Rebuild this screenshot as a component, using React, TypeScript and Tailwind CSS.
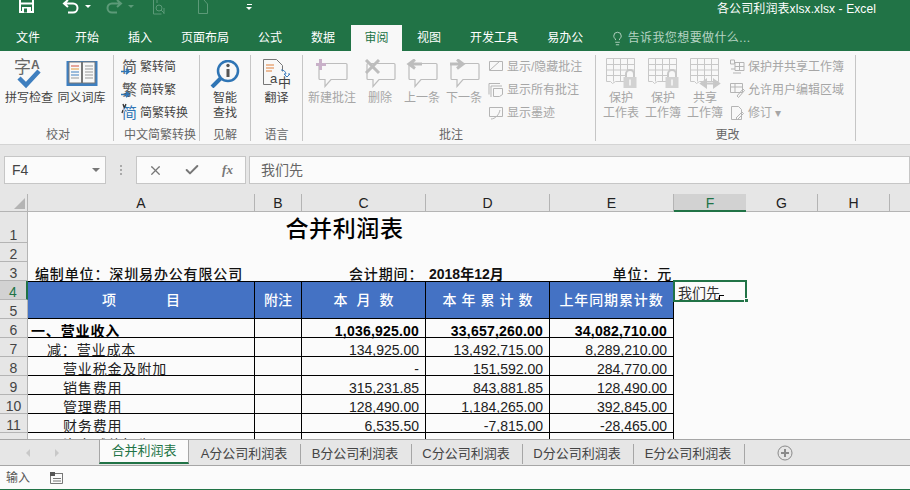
import { ReactNode } from "react";
import { Check, Lightbulb, X } from "lucide-react";

const FONT = "font-['Liberation_Sans','Noto_Sans_CJK_SC',sans-serif]";

const TABS = ["开始", "插入", "页面布局", "公式", "数据"];
const COLS = ["A", "B", "C", "D", "E", "F", "G", "H"];
const SHEETS = ["A分公司利润表", "B分公司利润表", "C分公司利润表", "D分公司利润表", "E分公司利润表"];

const ROWS = [
  { n: 6, label: "一、营业收入", pad: "pl-[3px]", bold: true, c: "1,036,925.00", d: "33,657,260.00", e: "34,082,710.00" },
  { n: 7, label: "减：营业成本", pad: "pl-[19px]", c: "134,925.00", d: "13,492,715.00", e: "8,289,210.00" },
  { n: 8, label: "营业税金及附加", pad: "pl-[35px]", c: "-", d: "151,592.00", e: "284,770.00" },
  { n: 9, label: "销售费用", pad: "pl-[35px]", c: "315,231.85", d: "843,881.85", e: "128,490.00" },
  { n: 10, label: "管理费用", pad: "pl-[35px]", c: "128,490.00", d: "1,184,265.00", e: "392,845.00" },
  { n: 11, label: "财务费用", pad: "pl-[35px]", c: "6,535.50", d: "-7,815.00", e: "-28,465.00" },
  { n: 12, label: "资产减值损失", pad: "pl-[35px]", c: "", d: "", e: "" },
];

function Group({ label, className, children }: { label: string; className: string; children: ReactNode }) {
  return (
    <section className={"flex h-[86px] shrink-0 flex-col border-r border-[#c6c6c6] " + className}>
      <div className="flex h-[70px] flex-1">{children}</div>
      <div className="-mb-[1px] text-center text-[12px] leading-[14px] text-[#666]">{label}</div>
    </section>
  );
}

function BigBtn({ icon, lines, w, dim }: { icon: ReactNode; lines: string[]; w: string; dim?: boolean }) {
  return (
    <div className={"flex shrink-0 flex-col items-center " + w + (dim ? " text-[#a6a6a6]" : " text-[#444]")}>
      <div className="flex h-[36px] items-end pb-[2px]">{icon}</div>
      {lines.map((l) => (
        <div key={l} className="whitespace-nowrap text-[12px] leading-[15px]">
          {l}
        </div>
      ))}
    </div>
  );
}

function SmallBtn({ icon, label, dim }: { icon: ReactNode; label: string; dim?: boolean }) {
  return (
    <div className={"flex h-[23px] items-center gap-[3px] whitespace-nowrap text-[12px] " + (dim ? "text-[#a6a6a6]" : "text-[#444]")}>
      <span className="flex w-[16px] justify-center">{icon}</span>
      {label}
    </div>
  );
}

function Bubble({ children }: { children?: ReactNode }) {
  return (
    <svg width="32" height="29" viewBox="0 0 32 29" fill="none" className="mb-[1px]">
      <path d="M4 4.500h26a1 1 0 0 1 1 1v14a1 1 0 0 1-1 1H15l-6 7v-7H4a1 1 0 0 1-1-1v-14a1 1 0 0 1 1-1z" fill="#f8f8f8" stroke="#bdbdbd" strokeWidth="1.200" />
      {children}
    </svg>
  );
}

function SheetGridIcon({ kind }: { kind: "lock" | "share" }) {
  return (
    <svg width="32" height="32" viewBox="0 0 32 32" fill="none" stroke="#c8c8c8">
      <path d="M1.500 1.500h28v23h-19l-3 2-2-2h-4z" fill="#f8f8f8" />
      <path d="M1.500 7.500h28M1.500 13h28M1.500 18.500h28M8.500 1.500v23M15.500 1.500v23M22.500 1.500v23" />
      {kind === "lock" ? (
        <>
          <path d="M21 20v-3a4 4 0 0 1 8 0v3" strokeWidth="2" fill="#f8f8f8" />
          <rect x="18.500" y="20" width="13" height="11" fill="#d2d2d2" stroke="none" />
          <path d="M25 22.500v6" stroke="#f8f8f8" strokeWidth="1.500" />
        </>
      ) : (
        <path d="M13 26.500h16M17 23l-5 3.500 5 3.500zM25 23l5 3.500-5 3.500z" fill="#c4c4c4" strokeWidth="2" />
      )}
    </svg>
  );
}

function Glyph({ ch, arrow, blue }: { ch: string; arrow?: boolean; blue?: boolean }) {
  return (
    <svg width="16" height="19" viewBox="0 0 16 19" className="overflow-visible">
      <text x="1" y="15" fontSize="15" fill={blue ? "#2f75b5" : "#555"} fontFamily="'Noto Sans CJK SC'">
        {ch}
      </text>
      {arrow && <path d="M0 14.500h7M5 12l3 2.500-3 2.500" stroke="#2f75b5" strokeWidth="1.700" fill="none" />}
      {blue && <path d="M2 1l1 3M5 1L3 5M2 7l-1 3" stroke="#333" strokeWidth="1.300" fill="none" />}
    </svg>
  );
}

function DimSmall({ d }: { d: string }) {
  return (
    <svg width="16" height="16" viewBox="0 0 16 16" fill="none" stroke="#b5b5b5">
      <path d={d} />
    </svg>
  );
}

function Ribbon() {
  return (
    <div className="flex h-[94px] shrink-0 items-start border-b border-[#d4d4d4] bg-[#f8f8f8] pt-[4px]">
      <Group label="校对" className="w-[114px] pl-[3px]">
        <BigBtn
          w="w-[52px]"
          lines={["拼写检查"]}
          icon={
            <svg width="30" height="33" viewBox="0 0 30 33" className="overflow-visible">
              <text x="0" y="17" fontSize="17" fill="#666" fontFamily="'Noto Sans CJK SC'">字</text>
              <text x="17" y="13" fontSize="12" fontWeight="700" fill="#666" fontFamily="'Liberation Sans'">A</text>
              <path d="M5 22l7 7L25 15" stroke="#3f7fbf" strokeWidth="4.500" fill="none" />
            </svg>
          }
        />
        <BigBtn
          w="w-[53px]"
          lines={["同义词库"]}
          icon={
            <svg width="32" height="27" viewBox="0 0 32 27" fill="none" className="mb-[2px]">
              <rect x="0.500" y="1" width="31" height="25" fill="#3f7fbf" />
              <path d="M3 2h12.500v21H3zM16.500 2H29v21H16.500z" fill="#f8f8f8" stroke="#777" />
              <path d="M5 6h8" stroke="#d0503c" />
              <path d="M5 9h8" stroke="#e09a3c" />
              <path d="M5 12h8M5 15h8" stroke="#3f7fbf" />
              <path d="M5 18h8M19 6h8M19 9h8M19 12h8M19 15h8M19 18h8" stroke="#999" />
            </svg>
          }
        />
      </Group>
      <Group label="中文简繁转换" className="w-[86px] pl-[7px]">
        <div className="flex flex-col">
          <SmallBtn icon={<Glyph ch="简" arrow />} label="繁转简" />
          <SmallBtn icon={<Glyph ch="繁" arrow />} label="简转繁" />
          <SmallBtn icon={<Glyph ch="简" blue />} label="简繁转换" />
        </div>
      </Group>
      <Group label="见解" className="w-[51px]">
        <BigBtn
          w="w-full"
          lines={["智能", "查找"]}
          icon={
            <svg width="30" height="28" viewBox="0 0 30 28" fill="none" className="mb-[1px]">
              <circle cx="18" cy="11" r="10" fill="#f8f8f8" stroke="#2f75b5" strokeWidth="2.500" />
              <path d="M10.500 18.500L2 27" stroke="#2f75b5" strokeWidth="4" />
              <path d="M18 9v8" stroke="#555" strokeWidth="3" />
              <circle cx="18" cy="5.500" r="1.700" fill="#555" />
            </svg>
          }
        />
      </Group>
      <Group label="语言" className="w-[52px]">
        <BigBtn
          w="w-full"
          lines={["翻译"]}
          icon={
            <svg width="30" height="31" viewBox="0 0 30 31" fill="none" className="overflow-visible">
              <path d="M1.500 1.500h13l6 6v6M1.500 1.500v25h8" stroke="#777" fill="#f8f8f8" />
              <path d="M4 7h8M4 10h8M4 13h6" stroke="#e0803c" />
              <text x="8" y="25" fontSize="13" fill="#444" fontFamily="'Liberation Sans'">a</text>
              <text x="16" y="29" fontSize="13" fill="#444" fontFamily="'Noto Sans CJK SC'">中</text>
              <path d="M19 12a5 5 0 0 1 5 4l-2 0 3 3 3-3-2 0" stroke="#3f7fbf" />
            </svg>
          }
        />
      </Group>
      <Group label="批注" className="w-[293px] pl-[4px]">
        <BigBtn
          w="w-[50px]"
          dim
          lines={["新建批注"]}
          icon={
            <Bubble>
              <path d="M3 0h3v4h4v3H6v4H3V7H0V4h3z" fill="#c9b1c9" />
            </Bubble>
          }
        />
        <BigBtn
          w="w-[46px]"
          dim
          lines={["删除"]}
          icon={
            <Bubble>
              <path d="M2 1l13 13M15 1L2 14" stroke="#bdbdbd" strokeWidth="3" />
            </Bubble>
          }
        />
        <BigBtn
          w="w-[38px]"
          dim
          lines={["上一条"]}
          icon={
            <Bubble>
              <path d="M16 5H5M9 0.500L3 5l6 4.500" stroke="#bdbdbd" strokeWidth="3" />
            </Bubble>
          }
        />
        <BigBtn
          w="w-[46px]"
          dim
          lines={["下一条"]}
          icon={
            <Bubble>
              <path d="M2 5h11M9 0.500L15 5 9 9.500" stroke="#bdbdbd" strokeWidth="3" />
            </Bubble>
          }
        />
        <div className="ml-[1px] flex flex-col">
          <SmallBtn dim icon={<DimSmall d="M1.500 2.500h13v9h-13zM2 11l10-9" />} label="显示/隐藏批注" />
          <SmallBtn dim icon={<DimSmall d="M1 1.500h11M1 1.500v11M3 4h11M3 4v11M5.500 6.500h9v6l-3 2h-6z" />} label="显示所有批注" />
          <SmallBtn dim icon={<DimSmall d="M1.500 2.500h13v9h-13zM3 14c4 0 8-4 9-9" />} label="显示墨迹" />
        </div>
      </Group>
      <Group label="更改" className="w-[260px] pl-[4px]">
        <BigBtn w="w-[42px]" dim lines={["保护", "工作表"]} icon={<SheetGridIcon kind="lock" />} />
        <BigBtn w="w-[42px]" dim lines={["保护", "工作簿"]} icon={<SheetGridIcon kind="lock" />} />
        <BigBtn w="w-[42px]" dim lines={["共享", "工作簿"]} icon={<SheetGridIcon kind="share" />} />
        <div className="ml-[3px] flex flex-col">
          <SmallBtn dim icon={<DimSmall d="M1.500 1h4v4h-4zM6 3.500h9v8H6zM6 7.500h9M10.500 3.500v8M2 10h4M4 14h8" />} label="保护并共享工作簿" />
          <SmallBtn dim icon={<DimSmall d="M1.500 1.500h12v9h-12zM1.500 5h12M6 1.500v9M8 14l6-7 1.500 1.500-6 7z" />} label="允许用户编辑区域" />
          <SmallBtn dim icon={<DimSmall d="M2.500 1.500h7l3 3v10h-10zM7 13l6-6 1.500 1.500-6 6z" />} label="修订 ▾" />
        </div>
      </Group>
    </div>
  );
}

function Sheet() {
  const head = "row-span-2 flex items-center justify-center border-y border-r border-black bg-[#4472c4] pt-[1px] text-[14px] font-medium text-white";
  const cell = "flex items-center justify-end border-r border-b border-black pt-[5px] pr-[6px] text-[14px] leading-[14px] text-[#222]";
  const rowHead = "flex items-end justify-center border-r border-b border-[#b4b4b4] bg-[#e6e6e6] text-[14px] leading-[14px] text-[#444]";

  return (
    <div className="h-[245px] shrink-0 overflow-hidden bg-[#fbfbfb]">
      <div className="grid grid-cols-[28px_227px_47px_124px_124px_124px_72px_72px_72px_20px] grid-rows-[18px_31px_19px_19px_19px_19px_19px_19px_19px_19px_19px_19px_19px]">
        <div className="flex items-end justify-end border-r border-b border-[#b4b4b4] bg-[#e6e6e6] p-[2px]">
          <div className="h-0 w-0 border-b-[11px] border-l-[11px] border-b-[#b4b4b4] border-l-transparent" />
        </div>
        {COLS.map((c) => (
          <div
            key={c}
            className={
              "flex items-center justify-center pt-[2px] text-[14px] " +
              (c === "F"
                ? "border-b-2 border-[#217346] bg-[#d2d2d2] text-[#217346]"
                : "border-r border-b border-[#b4b4b4] bg-[#e6e6e6] text-[#222]")
            }
          >
            {c}
          </div>
        ))}
        <div className="border-b border-[#b4b4b4] bg-[#e6e6e6]" />

        {/* 1 */}
        <div className={rowHead}>1</div>
        <div className="col-span-5 flex items-center justify-center pt-[3px] pr-[13px] text-[23px] font-medium tracking-[0.6px] text-black">
          合并利润表
        </div>
        <div className="col-span-4" />

        {/* 2 */}
        <div className={rowHead}>2</div>
        <div className="col-span-9" />

        {/* 3 */}
        <div className={rowHead}>3</div>
        <div className="col-span-2 flex items-center pt-[5px] pl-[7px] text-[14px] leading-[14px] font-medium tracking-[0.86px] whitespace-nowrap text-[#111]">
          编制单位：深圳易办公有限公司
        </div>
        <div className="flex items-center pt-[5px] pl-[47px] text-[14px] leading-[14px] font-medium tracking-[0.86px] whitespace-nowrap text-[#111]">
          会计期间：
        </div>
        <div className="flex items-center pt-[5px] pl-[3px] text-[14px] leading-[14px] font-bold whitespace-nowrap text-[#111]">2018年12月</div>
        <div className="flex items-center justify-end pt-[5px] pr-[2px] text-[14px] leading-[14px] font-medium tracking-[0.86px] whitespace-nowrap text-[#111]">
          单位：元
        </div>
        <div className="col-span-4" />

        {/* 4 and 5 */}
        <div className="flex items-end justify-center border-r-2 border-b border-r-[#217346] border-b-[#b4b4b4] bg-[#d2d2d2] text-[14px] leading-[14px] text-[#217346]">
          4
        </div>
        <div className={head + " gap-[50px]"}>
          <span>项</span>
          <span>目</span>
        </div>
        <div className={head}>附注</div>
        <div className={head + " gap-[9px]"}>
          <span>本</span>
          <span>月</span>
          <span>数</span>
        </div>
        <div className={head + " gap-[5px]"}>
          <span>本</span>
          <span>年</span>
          <span>累</span>
          <span>计</span>
          <span>数</span>
        </div>
        <div className={head + " tracking-[0.86px]"}>上年同期累计数</div>
        <div className="relative flex items-center pt-[4px] pl-[4px] text-[14px] leading-[14px] text-[#333]">
          我们先
          <div className="absolute -top-[1px] -left-[1px] h-[22px] w-[74px] border-2 border-[#217346]" />
          <div className="absolute top-[17px] right-[-3px] h-[5px] w-[5px] border border-[#fbfbfb] bg-[#217346]" />
          <div className="absolute top-[14px] left-[45px] h-[5px] w-[5px] border-t border-l border-black" />
        </div>
        <div className="col-span-3" />

        <div className={rowHead}>5</div>
        <div className="col-span-4" />

        {/* body */}
        {ROWS.map((r) => (
          <div key={r.n} className="contents">
            <div className={rowHead}>{r.n}</div>
            <div
              className={
                "flex items-center border-r border-b border-black pt-[5px] text-[14px] leading-[14px] tracking-[0.86px] whitespace-nowrap " +
                r.pad +
                (r.bold ? " font-bold text-black" : " text-[#222]")
              }
            >
              {r.label}
            </div>
            <div className="border-r border-b border-black" />
            {[r.c, r.d, r.e].map((v, i) => (
              <div key={i} className={cell + (r.bold ? " font-bold tracking-[0.2px] text-black" : "")}>
                {v}
              </div>
            ))}
            <div className="col-span-4" />
          </div>
        ))}
      </div>
    </div>
  );
}

export default function App() {
  return (
    <div className={"flex h-[490px] w-[910px] flex-col overflow-hidden bg-[#e6e6e6] " + FONT}>
      {/* title bar */}
      <div className="flex h-[25px] shrink-0 items-start bg-[#217346] pl-[19px] text-white">
        <svg width="15" height="14" viewBox="0 0 15 14" fill="none" className="-mt-[1px]">
          <path d="M1 0v13h13V0" stroke="#fff" strokeWidth="2" />
          <path d="M2 4.500h11" stroke="#fff" strokeWidth="2" />
          <path d="M3 8h9v5.500H3z" fill="#fff" />
          <path d="M5 9.500h3v4H5z" fill="#217346" />
        </svg>
        <svg width="18" height="14" viewBox="0 0 18 14" fill="none" className="ml-[28px]">
          <path d="M3 3.500h8a4.500 4.500 0 0 1 0 9H6M6 0L2 3.500 6 7" stroke="#fff" strokeWidth="2" />
        </svg>
        <span className="mt-[5px] ml-[5px] h-0 w-0 border-x-[3px] border-t-[3px] border-x-transparent border-t-white" />
        <svg width="18" height="14" viewBox="0 0 18 14" fill="none" className="ml-[14px]">
          <path d="M15 3.500H7a4.500 4.500 0 0 0 0 9h5M12 0l4 3.500L12 7" stroke="#5c9a78" strokeWidth="2" />
        </svg>
        <span className="mt-[5px] ml-[5px] h-0 w-0 border-x-[3px] border-t-[3px] border-x-transparent border-t-[#5c9a78]" />
        <svg width="14" height="15" viewBox="0 0 14 15" fill="none" stroke="#5c9a78" className="ml-[18px]">
          <path d="M1.500 0v14h8M5 0v3M12 8v6" />
          <circle cx="7" cy="8" r="3" />
          <path d="M9 10l3 3" />
        </svg>
        <svg width="12" height="14" viewBox="0 0 12 14" fill="none" stroke="#5c9a78" className="ml-[31px]">
          <path d="M1.500 0v13.500h9V4L7 0" />
        </svg>
        <span className="mt-[4px] ml-[37px] flex flex-col items-center gap-[2px]">
          <span className="h-[1px] w-[5px] bg-white" />
          <span className="h-0 w-0 border-x-[3px] border-t-[3px] border-x-transparent border-t-white" />
        </span>
        <div className="mt-[2px] ml-auto pr-[34px] text-[12px] leading-[15px] tracking-[0.1px] whitespace-nowrap">
          各公司利润表xlsx.xlsx - Excel
        </div>
      </div>

      {/* ribbon tabs */}
      <div className="flex h-[26px] shrink-0 items-stretch bg-[#217346] text-[12px] text-white">
        <div className="flex items-center pr-[20.500px] pl-[16px]">文件</div>
        {TABS.map((t) => (
          <div key={t} className="flex items-center px-[14.500px]">
            {t}
          </div>
        ))}
        <div className="ml-[1.500px] flex w-[51px] items-center justify-center bg-[#f8f8f8] text-[#217346]">审阅</div>
        <div className="ml-[15px] flex items-center pr-[14.500px]">视图</div>
        <div className="flex items-center px-[14.500px]">开发工具</div>
        <div className="flex items-center px-[14.500px]">易办公</div>
        <div className="ml-[12px] flex items-center gap-[3px] text-[#b6d3c3]">
          <Lightbulb size={15} strokeWidth={1.500} />
          <span className="tracking-[0.400px]">告诉我您想要做什么...</span>
        </div>
      </div>

      <Ribbon />

      {/* formula bar */}
      <div className="flex h-[49px] shrink-0 items-start pt-[11px] pl-[4px]">
        <div className="flex h-[28px] w-[102px] items-center justify-between border border-[#c6c6c6] bg-[#fbfbfb] pr-[5px] pl-[7px] text-[14px] text-[#444]">
          F4
          <span className="h-0 w-0 border-x-[4px] border-t-[4px] border-x-transparent border-t-[#777]" />
        </div>
        <div className="flex h-[28px] w-[30px] flex-col items-center justify-center gap-[2px]">
          <span className="h-[2px] w-[2px] bg-[#aaa]" />
          <span className="h-[2px] w-[2px] bg-[#aaa]" />
          <span className="h-[2px] w-[2px] bg-[#aaa]" />
        </div>
        <div className="flex h-[28px] w-[110px] items-center border border-[#c6c6c6] bg-[#fbfbfb] text-[#777]">
          <span className="flex w-[36px] justify-center">
            <X size={15} strokeWidth={2} />
          </span>
          <span className="flex w-[37px] justify-center">
            <Check size={16} strokeWidth={3} />
          </span>
          <span className="w-[35px] text-center font-['Liberation_Serif',serif] text-[13px] font-bold italic">fx</span>
        </div>
        <div className="ml-[3px] flex h-[28px] flex-1 items-center border border-[#c6c6c6] bg-[#fbfbfb] pl-[11px] text-[14px] text-[#666]">
          我们先
        </div>
      </div>

      <Sheet />

      {/* sheet tabs */}
      <div className="flex h-[27px] shrink-0 items-start border-t border-b border-[#a6a6a6] text-[13px] text-[#444]">
        <div className="flex w-[99px] items-center gap-[25px] pt-[9px] pl-[26px]">
          <span className="h-0 w-0 border-y-[4px] border-r-[4px] border-y-transparent border-r-[#c8c8c8]" />
          <span className="h-0 w-0 border-y-[4px] border-l-[4px] border-y-transparent border-l-[#c8c8c8]" />
        </div>
        <div className="flex h-[24px] w-[90px] items-center justify-center border-x border-b-2 border-x-[#a6a6a6] border-b-[#217346] bg-[#fbfbfb] text-[#217346]">
          合并利润表
        </div>
        <div className="ml-[1px] flex">
          {SHEETS.map((s) => (
            <div key={s} className="mt-[4px] flex h-[20px] w-[111px] items-center justify-center border-r border-[#a6a6a6] pr-[2px] whitespace-nowrap">
              {s}
            </div>
          ))}
        </div>
        <svg width="16" height="16" viewBox="0 0 16 16" fill="none" className="mt-[5px] ml-[32px]">
          <circle cx="8" cy="8" r="7" stroke="#8a8a8a" />
          <path d="M8 4v8M4 8h8" stroke="#8a8a8a" strokeWidth="2" />
        </svg>
      </div>

      {/* status bar */}
      <div className="flex h-[23px] shrink-0 items-center gap-[20px] bg-[#fbfbfb] pl-[6px] text-[12px] text-[#555]">
        输入
        <svg width="13" height="12" viewBox="0 0 13 12" fill="none">
          <rect x="0" y="0" width="5" height="4" fill="#555" />
          <path d="M5 1.500h8M0.500 4v7.500h12V1.500M3 6.500h8M3 9h8" stroke="#777" />
        </svg>
      </div>
      <div className="h-[1px] shrink-0 bg-[#217346]" />
    </div>
  );
}
